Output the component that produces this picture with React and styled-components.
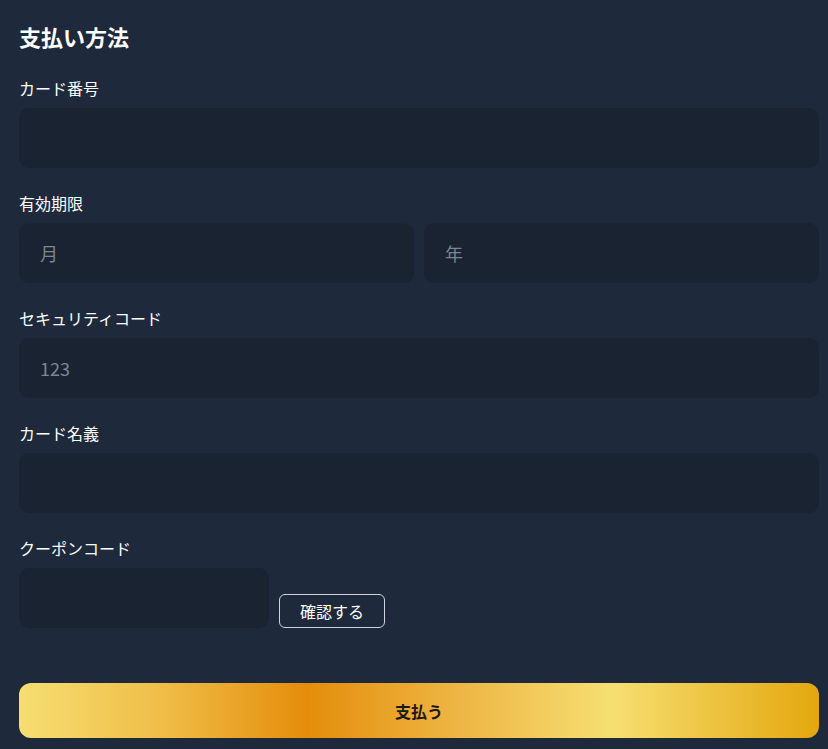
import React from "react";
import styled, { createGlobalStyle } from "styled-components";

const Global = createGlobalStyle`
  html, body { margin: 0; padding: 0; background: #1e293b; }
  body { font-family: "Noto Sans CJK JP", "Noto Sans", sans-serif; color: #ffffff; }
  * { box-sizing: border-box; }
`;

const Page = styled.div`
  min-height: 749px;
  background: #1e293b;
  padding: 20px 9px 0 19px;
`;

const Form = styled.form`
  width: 800px;
  display: flex;
  flex-direction: column;
`;

const Title = styled.h2`
  margin: 0 0 24px;
  font-size: 22px;
  line-height: 32px;
  font-weight: 700;
  color: #ffffff;
`;

const Field = styled.div`
  display: flex;
  flex-direction: column;
  margin-bottom: 23px;
`;

const Label = styled.label`
  font-size: 16px;
  line-height: 24px;
  margin-bottom: 8px;
  color: #ffffff;
`;

const Row = styled.div`
  display: flex;
  gap: ${(p) => p.$gap || 10}px;
  align-items: ${(p) => p.$align || "stretch"};
`;

const Input = styled.input`
  height: 60px;
  width: ${(p) => p.$width || "100%"};
  flex: ${(p) => (p.$grow ? 1 : "none")};
  min-width: 0;
  border: none;
  outline: none;
  border-radius: 10px;
  background: #1a2332;
  color: #ffffff;
  padding: 0 21px;
  font-family: inherit;
  font-size: 18px;
  &::placeholder { color: #7c8594; }
`;

const OutlineButton = styled.button`
  height: 34px;
  padding: 0 20px;
  border: 1px solid #d0d4da;
  border-radius: 6px;
  background: transparent;
  color: #ffffff;
  font-family: inherit;
  font-size: 16px;
  line-height: 1;
  cursor: pointer;
`;

const PayButton = styled.button`
  margin-top: 32px;
  height: 55px;
  width: 100%;
  border: none;
  border-radius: 12px;
  background: linear-gradient(
    90deg,
    #f6de72 0%,
    #efbd47 18%,
    #e48d0b 36%,
    #eeb644 55%,
    #f6df72 74%,
    #ecc13c 88%,
    #e3a70e 100%
  );
  color: #1a1a1a;
  font-family: inherit;
  font-size: 16px;
  font-weight: 700;
  cursor: pointer;
`;

export default function App() {
  return (
    <>
      <Global />
      <Page>
        <Form onSubmit={(e) => e.preventDefault()}>
          <Title>支払い方法</Title>
          <Field>
            <Label>カード番号</Label>
            <Input />
          </Field>
          <Field>
            <Label>有効期限</Label>
            <Row>
              <Input $grow placeholder="月" />
              <Input $grow placeholder="年" />
            </Row>
          </Field>
          <Field>
            <Label>セキュリティコード</Label>
            <Input placeholder="123" />
          </Field>
          <Field>
            <Label>カード名義</Label>
            <Input />
          </Field>
          <Field>
            <Label>クーポンコード</Label>
            <Row $align="flex-end">
              <Input $width="250px" />
              <OutlineButton type="button">確認する</OutlineButton>
            </Row>
          </Field>
          <PayButton type="submit">支払う</PayButton>
        </Form>
      </Page>
    </>
  );
}
